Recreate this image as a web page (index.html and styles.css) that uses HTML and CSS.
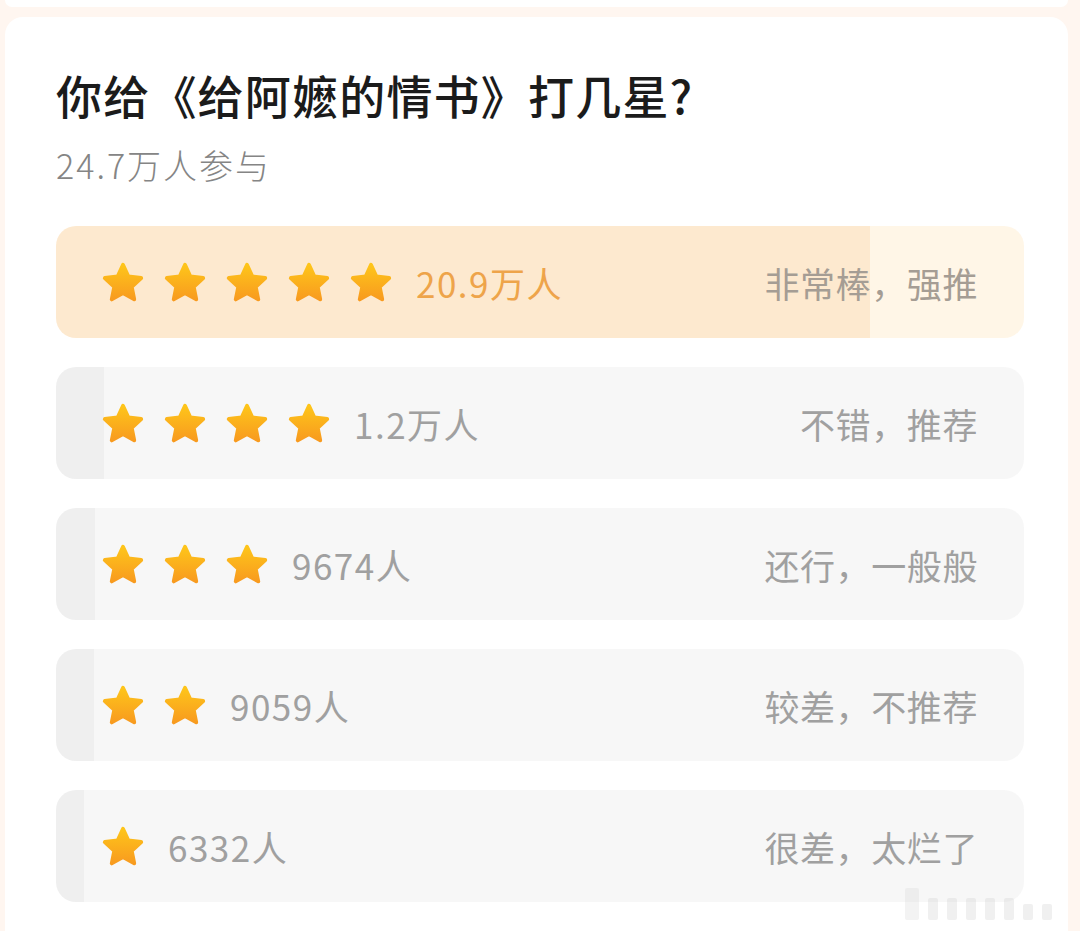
FILE: index.html
```html
<!DOCTYPE html>
<html lang="zh">
<head>
  <meta charset="UTF-8" />
  <meta name="viewport" content="width=device-width, initial-scale=1.0" />
  <title>投票</title>
  <link rel="stylesheet" href="styles.css">
</head>
<body>
  <svg class="defs" width="0" height="0" aria-hidden="true">
    <defs>
      <linearGradient id="starFill" x1="0" y1="0" x2="0" y2="1">
        <stop offset="0" stop-color="#fec51a" />
        <stop offset="1" stop-color="#f89b1f" />
      </linearGradient>
      <symbol id="star" viewBox="0 0 24 24">
        <polygon points="12,3 14.82,9.12 21.51,9.91 16.57,14.48 17.88,21.09 12,17.8 6.12,21.09 7.43,14.48 2.49,9.91 9.18,9.12"
          fill="url(#starFill)" stroke="url(#starFill)" stroke-width="2" stroke-linejoin="round" />
      </symbol>
    </defs>
  </svg>

  <div class="prev-card"></div>

  <div class="card">
    <h1 class="title">你给《给阿嬷的情书》打几星?</h1>
    <div class="count-all">24.7万人参与</div>

    <div class="options">
      <div class="option top" style="--p: 84.1%">
        <div class="stars">
          <svg class="star"><use href="#star" /></svg>
          <svg class="star"><use href="#star" /></svg>
          <svg class="star"><use href="#star" /></svg>
          <svg class="star"><use href="#star" /></svg>
          <svg class="star"><use href="#star" /></svg>
        </div>
        <span class="votes">20.9万人</span>
        <span class="label">非常棒，强推</span>
      </div>

      <div class="option" style="--p: 5%">
        <div class="stars">
          <svg class="star"><use href="#star" /></svg>
          <svg class="star"><use href="#star" /></svg>
          <svg class="star"><use href="#star" /></svg>
          <svg class="star"><use href="#star" /></svg>
        </div>
        <span class="votes">1.2万人</span>
        <span class="label">不错，推荐</span>
      </div>

      <div class="option" style="--p: 4%">
        <div class="stars">
          <svg class="star"><use href="#star" /></svg>
          <svg class="star"><use href="#star" /></svg>
          <svg class="star"><use href="#star" /></svg>
        </div>
        <span class="votes">9674人</span>
        <span class="label">还行，一般般</span>
      </div>

      <div class="option" style="--p: 3.9%">
        <div class="stars">
          <svg class="star"><use href="#star" /></svg>
          <svg class="star"><use href="#star" /></svg>
        </div>
        <span class="votes">9059人</span>
        <span class="label">较差，不推荐</span>
      </div>

      <div class="option" style="--p: 2.9%">
        <div class="stars">
          <svg class="star"><use href="#star" /></svg>
        </div>
        <span class="votes">6332人</span>
        <span class="label">很差，太烂了</span>
      </div>
    </div>
  </div>

  <div class="watermark">
    <span class="wm-bar tall"></span>
    <span class="wm-bar"></span>
    <span class="wm-bar"></span>
    <span class="wm-bar"></span>
    <span class="wm-bar"></span>
    <span class="wm-bar"></span>
    <span class="wm-bar short"></span>
    <span class="wm-bar short"></span>
  </div>
</body>
</html>
```

FILE: styles.css
```css
body {
  margin: 0;
  padding: 0;
  background: #fff6f0;
  font-family: "Noto Sans CJK SC", "Noto Sans", sans-serif;
  color: #1b1b1b;
  height: 931px;
  overflow: hidden;
  position: relative;
}

.defs {
  position: absolute;
  width: 0;
  height: 0;
}

.prev-card {
  height: 7px;
  margin: 0 12px 0 5px;
  background: #fff;
  border-radius: 0 0 14px 14px;
}

.card {
  margin: 10px 12px 0 5px;
  background: #fff;
  border-radius: 18px;
  padding: 49px 44px 40px 51px;
  height: 1000px;
}

.title {
  margin: 0;
  font-size: 46px;
  font-weight: 500;
  line-height: 56px;
  letter-spacing: 1.2px;
  color: #1b1b1b;
}

.count-all {
  margin-top: 21px;
  font-size: 34px;
  font-weight: 300;
  line-height: 44px;
  letter-spacing: 2px;
  color: #858585;
}

.options {
  margin-top: 39px;
  display: flex;
  flex-direction: column;
  gap: 29px;
}

.option {
  height: 112px;
  border-radius: 20px;
  display: flex;
  align-items: center;
  padding: 0 46px 0 44px;
  background: linear-gradient(to right, #efefef var(--p), #f7f7f7 var(--p));
  color: #a0a0a0;
  font-size: 35px;
}

.option.top {
  background: linear-gradient(to right, #fde9cf var(--p), #fff6e7 var(--p));
}

.stars {
  display: flex;
  gap: 16px;
}

.star {
  width: 46px;
  height: 46px;
  display: block;
}

.votes {
  margin-left: 22px;
  letter-spacing: 1.5px;
}

.option.top .votes {
  color: #eea44a;
}

.label {
  margin-left: auto;
  letter-spacing: 0.6px;
}

.option.top .label {
  color: #a59d94;
}

.watermark {
  position: absolute;
  left: 905px;
  top: 888px;
  display: flex;
  align-items: flex-end;
  gap: 9px;
  opacity: 0.3;
}

.wm-bar {
  width: 10px;
  height: 22px;
  background: #cfcfcf;
  border-radius: 2px;
}

.wm-bar.tall {
  width: 14px;
  height: 32px;
  background: #d8d8d8;
}

.wm-bar.short {
  height: 16px;
}
```
